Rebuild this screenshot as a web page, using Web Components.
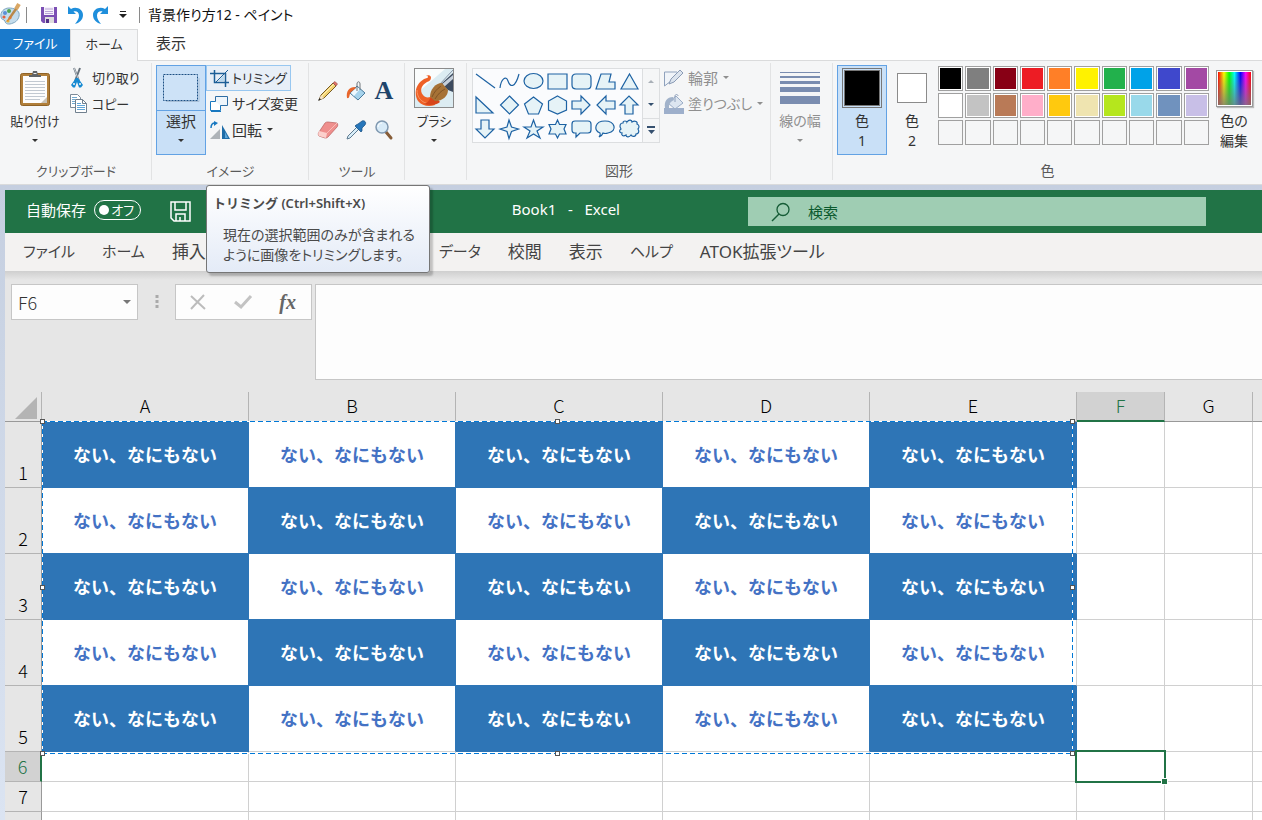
<!DOCTYPE html>
<html lang="ja">
<head>
<meta charset="utf-8">
<meta name="viewport" content="width=device-width, initial-scale=1">
<title>背景作り方12 - ペイント</title>
<style>
html, body { margin: 0; height: 100%; }
body { overflow: hidden; background: #fff; color: #333; font: 15px/20px "Noto Sans", "Noto Sans CJK JP", sans-serif; }
</style>
</head>
<body>
<paint-app></paint-app>
<script>
const base = `<style>
*, *::before, *::after { box-sizing: border-box; }
button, input, textarea { font: inherit; color: inherit; margin: 0; padding: 0; border: 0; background: none; outline: 0; border-radius: 0; }
button { cursor: default; }
</style>`;

function define(name, html, setup) {
  const template = document.createElement('template');
  template.innerHTML = base + html;
  customElements.define(name, class extends HTMLElement {
    constructor() {
      super();
      this.attachShadow({ mode: 'open' }).append(template.content.cloneNode(true));
    }
    connectedCallback() {
      if (setup && !this.ready) { this.ready = true; setup(this, this.shadowRoot); }
    }
  });
}

const icons = {
  palette: [20, 22, `<path d="M9 4C4 4 0 8 1 13c0 3 3 2 4 4 0 3 4 4 8 2 4-1 7-6 6-10-1-3-5-5-10-5z" fill="#c3dcec" stroke="#7ea6c0"/><circle cx="5" cy="9" r="2" fill="#5b8fd6"/><circle cx="9" cy="7" r="2" fill="#51a551"/><circle cx="4" cy="13" r="1.6" fill="#e2603f"/><circle cx="8" cy="17" r="1.6" fill="#e3b23c"/><path d="M18 2L9 15" stroke="#b9884a" stroke-width="2.4"/><path d="M19 0l-3 5" stroke="#d9a765" stroke-width="4"/><path d="M10 12l-4 6 6-4z" fill="#e07a30"/>`],
  save: [16, 16, `<path d="M0 0h16v16H2l-2-2z" fill="#7b4fb4"/><path d="M3 0h10v8H3z" fill="#f6f2fb"/><path d="M4 2h8M4 4.500h8M4 6.500h8" stroke="#b9a3d8"/><path d="M4 10h9v6H4z" fill="#ddd"/><path d="M5 12h3v4H5z" fill="#553289"/>`],
  undo: [16, 18, `<path d="M1 0v8h8L6.500 5.500C9 4.500 12 6 12 9.500c0 3-1.500 5.500-4 8.500 4-1 8-4 8-9C16 3 9 0 4 3z" fill="#1f8fdc"/>`],
  redo: [16, 18, `<path d="M15 0v8H7l2.500-2.500C7 4.500 4 6 4 9.500c0 3 1.500 5.500 4 8.500-4-1-8-4-8-9C0 3 7 0 12 3z" fill="#1f8fdc"/>`],
  custom: [8, 8, `<path d="M1 .5h6" stroke="#222"/><path d="M0 3h8L4 7z" fill="#222"/>`],
  arrow: [6, 4, `<path d="M0 0h6L3 3z" fill="currentColor"/>`],
  up: [6, 4, `<path d="M0 4h6L3 1z" fill="currentColor"/>`],
  more: [8, 8, `<path d="M0 1h8" stroke="#35506f" stroke-width="2"/><path d="M1 4h7L4.500 8z" fill="#35506f"/>`],
  paste: [32, 38, `<rect x="1.500" y="4.500" width="29" height="32" rx="2" fill="#b17f3a" stroke="#8f6226"/><path d="M4 7h24v27H4z" fill="#fdfdfd"/><path d="M22 34l6-6v6z" fill="#c9c2b6"/><path d="M6 12.500h20M6 15.500h20M6 18.500h20M6 21.500h20M6 24.500h20M6 27.500h20M6 30.500h15" stroke="#c2c9d1"/><path d="M10 6h3l1-4h4l1 4h3v2H10z" fill="#606468"/><path d="M14.500 4.500h3" stroke="#eee"/>`],
  cut: [14, 20, `<path d="M4 0l5 13M10 0L5 13" stroke="#67717b" stroke-width="2"/><path d="M4 0l5 13" stroke="#c6cdd4"/><path d="M6 10h2l5 7-2 2.500h-2L7 14l-2 5.500H3L1 17z" fill="#168ad2"/><circle cx="4" cy="16" r="1" fill="#f5f6f7"/><circle cx="10" cy="16" r="1" fill="#f5f6f7"/>`],
  copy: [17, 20, `<path d="M.5.500h7l3 3v10H.5z" fill="#fff" stroke="#7c8b99"/><path d="M2 3.500h5M2 5.500h3M2 7.500h3M2 9.500h3" stroke="#70a9d0"/><path d="M5.500 5.500h7l4 4v9h-11z" fill="#fff" stroke="#70808f"/><path d="M12.500 5.500v4h4" fill="none" stroke="#70808f"/><path d="M7 9.500h4M7 11.500h8M7 13.500h8M7 15.500h8" stroke="#5fa5d8"/>`],
  select: [36, 28, `<path d="M3 27.500h33V4" fill="none" stroke="#a9bfd6"/><rect x=".5" y=".5" width="34" height="26" fill="#cde2f7" stroke="#1c4f82" stroke-dasharray="2 1"/>`],
  crop: [19, 17, `<path d="M4.500 0v12.500H19M0 3.500h15.500V17" fill="none" stroke="#1d5f97" stroke-width="1.500"/><path d="M6 12L18 0" stroke="#1d5f97"/><path d="M8 11l6-6v6z" fill="#b8d8ee"/>`],
  resize: [18, 16, `<path d="M5.500.500h12v9h-12z" fill="#eef5fb" stroke="#2e6da4"/><path d="M5.500 5.500h-5v9h10v-5" fill="#fff" stroke="#1878c0"/><path d="M1 15.500h10" stroke="#1878c0"/>`],
  rotate: [20, 18, `<path d="M10 8v10H0z" fill="#aeb3b8"/><path d="M12 4l8 14h-8z" fill="#1e6ca8"/><path d="M15 11l3 6h-3z" fill="#60a7d8"/><path d="M1 7c0-3 1-5 4-5" fill="none" stroke="#1878c0" stroke-width="1.500"/><path d="M4 0l4 2-4 3z" fill="#1878c0"/>`],
  pencil: [20, 20, `<path d="M1 19l2-5L15 2l3 3L6 17z" fill="#f3d372" stroke="#765a24"/><path d="M4 15L16 3" stroke="#fff0b5"/><path d="M15 2l2-1.500 2.500 2.500L18 5z" fill="#e27168" stroke="#8d4b45" stroke-width=".6"/><path d="M1 19l2-5 3 3z" fill="#f5e4c8"/><path d="M0 20l1.500-3 1.500 1.500z" fill="#2b2b2b"/>`],
  fill: [20, 20, `<path d="M4 12L11 5l8 7-7 7z" fill="#a6d3ec" stroke="#497a9c"/><path d="M5 12l6-6 3 2-6 7z" fill="#eef9ff"/><path d="M11 10V3c0-3 3-3 3 0v6" fill="none" stroke="#70777d"/><path d="M9 6C3 6 0 10 1 17c3 1 2-4 4-6l5-4z" fill="#e8662c"/>`],
  eraser: [22, 18, `<path d="M8 2c1-1 2-1 3-1l9 1c1 1 1 3 0 4L11 16c-1 1-2 1-3 1l-6-2c-1-1-1-3 0-4z" fill="#ef8f8d" stroke="#b8605e" stroke-width=".7"/><path d="M2 10l8 2-1 5-7-2c-1-1-1-3 0-5z" fill="#fcd0cc"/><path d="M10 12L20 2" stroke="#f9bdb8"/>`],
  picker: [20, 20, `<path d="M2 16l9-9 2 2-9 9-3 1z" fill="#d8edf8" stroke="#5e7b91"/><path d="M10 5l2-1 4-3c2-1 5 1 3 4l-3 3v3l-1 1-6-6z" fill="#2776ba" stroke="#174d80" stroke-width=".7"/>`],
  zoom: [18, 20, `<path d="M11 12l5 6" stroke="#865c37" stroke-width="3" stroke-linecap="round"/><circle cx="7" cy="7" r="6" fill="#d8ebf8" stroke="#7f98b0" stroke-width="1.500"/><path d="M3 7c0-3 2-4 4-4" stroke="#fff" fill="none"/>`],
  brush: [40, 40, `<rect x=".5" y=".5" width="39" height="39" fill="#dcecf2" stroke="#8b8b8b"/><path d="M1 1h30L1 27z" fill="#fafcfc"/><path d="M39 5v19l-5-2-7-6z" fill="#3c4a5e"/><path d="M39 7L27 17l3 2 9-8z" fill="#c5cfda"/><path d="M39 2L25 17" stroke="#8896a8"/><path d="M17 9c0 3-1 4-4 5-5 3-8 8-4 13 2 3 6 3 10 1l2 9c-6 2-13 1-17-4C-2 22 5 12 13 10c2-1 1-2-1-2 2-1 4-1 5 1z" fill="#ee6026"/><path d="M3 22c0 7 4 13 13 14" stroke="#f79260" fill="none"/><path d="M17 29c-2 3-3 6-7 7 6 2 13 1 16-2l-5-6z" fill="#d7451a"/><path d="M16 29c0-7 5-14 12-14l6 7c0 6-5 11-13 11z" fill="#a67236"/><path d="M18 29c2-5 5-8 9-11M21 31c3-5 6-8 10-10" stroke="#805426" fill="none"/>`],
  outline: [20, 17, `<path d="M13 2H.500v14L16 4" fill="#f0f4f9" stroke="#8fa2bd"/><path d="M5 14l2-5 9-9 3 3-9 9z" fill="#dce4ee" stroke="#8a9bb5"/>`],
  pour: [20, 20, `<path d="M0 14h20v6H0z" fill="#9dafcb"/><path d="M4 9l8-7 7 7-8 6z" fill="#dce5f0" stroke="#9aacc6"/><path d="M9 3C3 3 0 7 1 14h4c0-4 1-6 5-8z" fill="#a1b2ca"/><path d="M11 8V2c0-2 3-2 3 0" fill="none" stroke="#8ea0bb"/>`],
  widths: [40, 33, `<path d="M0 .5h40" stroke="#7a8db0"/><path d="M0 5h40" stroke="#7a8db0" stroke-width="2"/><path d="M0 10.500h40" stroke="#7a8db0" stroke-width="3"/><path d="M0 17.500h40" stroke="#7a8db0" stroke-width="5"/><path d="M0 28h40" stroke="#7a8db0" stroke-width="8"/>`],
  floppy: [22, 22, `<path d="M1 1h19v19H4l-3-3zM5 1v8h11V1M6 20v-7h9v7M10 20v-4" fill="none" stroke="#fff" stroke-width="1.500"/>`],
  search: [18, 18, `<circle cx="11" cy="6.500" r="6" fill="none" stroke="#155c36" stroke-width="1.300"/><path d="M7 11l-7 7" stroke="#155c36" stroke-width="1.500"/>`],
  cancel: [16, 14, `<path d="M1 1l14 13M14 0L1 14" stroke="#bcbcbc" stroke-width="2" fill="none"/>`],
  check: [18, 14, `<path d="M1 7l6 5L17 1" stroke="#c3c3c3" stroke-width="3" fill="none"/>`],
  dots: [4, 14, `<path d="M.500 0h3v3h-3zM.500 5h3v3h-3zM.500 10h3v3h-3z" fill="#aaa"/>`],
  corner: [22, 22, `<path d="M22 0v22H0z" fill="#b4b4b4"/>`],
};
const shapes = {
  line: 'M1 3L20 17', curve: 'M1 17c1-9 6-13 8-7s7 8 11-7', ellipse: 'M1 10a9.500 7.500 0 1 0 19 0a9.500 7.500 0 1 0-19 0z', rect: 'M1 3h19v15H1z',
  round: 'M5 3h11q4 0 4 4v7q0 4-4 4H5q-4 0-4-4V7q0-4 4-4z', polygon: 'M1 18L6 3h10l-2 8h6v7z', triangle: 'M10.500 3l8.500 15H2z',
  right: 'M1 2v16h17z', diamond: 'M10.500 1l9 9-9 9-9-9z', pentagon: 'M10.500 2l9 7-4 10h-10l-4-10z', hexagon: 'M10.500 1l9 5v9l-9 4-9-4V6z',
  aright: 'M1 6h9V1l9 9-9 9v-5H1z', aleft: 'M20 6h-9V1l-9 9 9 9v-5h9z', aup: 'M6 19v-9H1l9-9 9 9h-5v9z', adown: 'M6 1v9H1l9 9 9-9h-5V1z',
  star4: 'M10 1l2.500 7 7 2-7 2.500-2.500 7-2-7-7-2.500 7-2z', star5: 'M10.500 1l2.500 7h7l-6 4 3 7-6.500-4L4 19l3-7-6-4h7z', star6: 'M10.500 1l2 4.500H19l-2 4.500 2 5h-6.500l-2 4-2-4H2l2-5-2-4.500h6.500z',
  callout: 'M4 2h13q3 0 3 3v6q0 3-3 3H9l-4 4v-4H4q-3 0-3-3V5q0-3 3-3z', bubble: 'M5 14C-2 11 0 2 10 2s13 10 3 12q-3 1-5 0-1 3-4 4 2-2 1-4z',
  cloud: 'M4 4c0-3 4-2 4-1 2-3 5-2 5 0 3-2 6 0 5 2 3 1 2 4 1 5 2 3 0 5-2 5 0 3-4 3-5 1-2 3-5 2-5 0-3 2-5 0-4-2-3 0-3-3-1-4-2-3-1-6 2-6z',
};

define('ui-icon', `<style>:host{display:block;flex:none} svg{display:block;overflow:visible} span{display:block;width:20px;font:bold 26px/20px "Liberation Serif",serif;color:#1f456b;text-align:center}</style>`, (host, root) => {
  const name = host.getAttribute('name');
  if (name === 'letter') { root.append(Object.assign(document.createElement('span'), { textContent: 'A' })); return; }
  const [w, h, body] = shapes[name]
    ? [21, 20, `<path d="${shapes[name]}" fill="${name === 'line' || name === 'curve' ? 'none' : '#e6f3f7'}" stroke="#1d62a3" stroke-width="1.200"/>`]
    : icons[name];
  root.innerHTML += `<svg width="${w}" height="${h}" viewBox="0 0 ${w} ${h}" fill="none" aria-hidden="true">${body}</svg>`;
});

define('title-bar', `<style>
:host{display:flex;align-items:center;height:29px;color:#111;background:#fff}
button{display:block;margin-right:10px}
.rule{width:1px;height:16px;background:#8a8a8a}
.first{margin:0 14px 0 6px}.last{margin:0 8px 0 2px}
h1{margin:0;font:inherit;font-size:14px;font-feature-settings:"palt"}
</style><ui-icon name="palette"></ui-icon><span class="rule first"></span>
<button aria-label="上書き保存"><ui-icon name="save"></ui-icon></button><button aria-label="元に戻す"><ui-icon name="undo"></ui-icon></button><button aria-label="やり直し"><ui-icon name="redo"></ui-icon></button><button aria-label="カスタマイズ"><ui-icon name="custom"></ui-icon></button>
<span class="rule last"></span><h1><slot></slot></h1>`);

define('ribbon-tabs', `<style>
:host{display:block}
nav{display:flex;height:32px;border-bottom:1px solid #dadbdc;font-size:13px;font-feature-settings:"palt"}
a{color:#333;text-decoration:none;text-align:center;line-height:29px;width:66px}
.file{width:70px;height:28px;background:#1979ca;color:#fff}
.on{width:68px;height:32px;background:#f5f6f7;border:1px solid #dadbdc;border-bottom:0}
.view{font-size:15px}
</style><nav><a class="file" href="#file">ファイル</a><a class="on" href="#home">ホーム</a><a class="view" href="#view">表示</a></nav>`);

define('ribbon-group', `<style>
:host{position:relative;display:flex;flex-direction:column;flex:none;width:var(--group);height:123px}
:host([wide]){flex:1}
:host(:not([wide]))::after{content:"";position:absolute;right:0;top:2px;bottom:4px;width:1px;background:#e2e3e4}
.body{display:flex;align-items:flex-start;flex:1;padding:4px 0 0 var(--pad,4px)}
.label{text-align:center;height:23px;color:#5a5a5a;font-size:var(--label,13px);font-feature-settings:"palt"}
</style><div class="body"><slot></slot></div><div class="label"></div><slot name="tip"></slot>`,
(host, root) => { root.querySelector('.label').textContent = host.getAttribute('label') || ''; });

define('big-button', `<style>
:host{display:block;flex:none;width:var(--button,50px);font-size:var(--size,15px);font-feature-settings:"palt"}
button{width:100%;height:90px;display:flex;flex-direction:column;align-items:center;border:1px solid transparent;white-space:nowrap}
.pic{height:44px;width:100%;display:flex;justify-content:center;align-items:center}
.text{line-height:20px;padding-top:1px}
ui-icon{margin-top:8px}
:host([on]) button{background:#c9e0f7;border-color:#62a2e4}
:host([split]) .pic{border-bottom:1px solid #62a2e4;height:45px}
:host([split]) .text{padding-top:0}
:host([muted]){color:#8f8f8f}
</style><button><span class="pic"><slot name="pic"></slot></span><span class="text"><slot></slot></span></button>`,
(host, root) => { if (host.hasAttribute('menu')) root.querySelector('button').insertAdjacentHTML('beforeend', '<ui-icon name="arrow"></ui-icon>'); });

define('small-button', `<style>
:host{display:block;font-size:var(--size,15px);font-feature-settings:"palt"}
button{display:flex;align-items:center;height:26px;padding:0 3px;border:1px solid transparent;white-space:nowrap}
.pic{width:22px;display:flex}
:host([on]) button{background:#e8eff7;border-color:#98c7f0}
:host([muted]){color:#8f8f8f}
:host([muted]) .pic{width:24px}
.menu{margin-left:5px}
</style><button><span class="pic"></span><slot></slot></button>`,
(host, root) => {
  root.querySelector('.pic').innerHTML = `<ui-icon name="${host.getAttribute('icon')}"></ui-icon>`;
  if (host.hasAttribute('menu')) root.querySelector('button').insertAdjacentHTML('beforeend', '<ui-icon class="menu" name="arrow"></ui-icon>');
});

define('tool-grid', `<style>
:host{display:grid;grid-template-columns:repeat(3,28px);grid-auto-rows:39px;padding-top:6px}
button{display:grid;place-items:center}
</style>${['pencil:鉛筆','fill:塗りつぶし','letter:テキスト','eraser:消しゴム','picker:色の選択','zoom:拡大鏡'].map(t => { const [n, l] = t.split(':'); return `<button aria-label="${l}"><ui-icon name="${n}"></ui-icon></button>`; }).join('')}`);

define('shape-gallery', `<style>
:host{display:flex;margin-top:3px;height:75px;border:1px solid #dcdee0;background:#fafbfd}
.grid{display:grid;grid-template-columns:repeat(7,24px);grid-auto-rows:24px;width:169px}
button{display:grid;place-items:center}
.scroll{display:grid;grid-template-rows:repeat(3,1fr);width:17px;border-left:1px solid #dcdee0;background:#f5f6f7;color:#35506f}
.scroll button:first-child{color:#a9b0b8}.scroll button:last-child{border-top:1px solid #dcdee0}
</style><div class="grid">${'line curve ellipse rect round polygon triangle right diamond pentagon hexagon aright aleft aup adown star4 star5 star6 callout bubble cloud'.split(' ').map(n => `<button aria-label="${n}"><ui-icon name="${n}"></ui-icon></button>`).join('')}</div>
<div class="scroll"><button aria-label="上"><ui-icon name="up"></ui-icon></button><button aria-label="下"><ui-icon name="arrow"></ui-icon></button><button aria-label="その他"><ui-icon name="more"></ui-icon></button></div>`);

define('color-chip', `<style>
:host{display:block;width:30px;height:30px;border:1px solid #8b8b8b;padding:1px;background:#fff}
:host([big]){width:40px;height:40px;padding:1px;border-color:#777;background:#c9e0f7}
div{height:100%;background:var(--c)}
:host([big]) div{border:1px solid #777}
</style><div></div>`);

define('color-palette', `<style>
:host{display:grid;grid-template-columns:repeat(10,1fr);grid-auto-rows:25px;gap:2px;flex:none;width:271px;margin:1px 3px 0 1px}
button{border:1px solid #a0a0a0;padding:1px}
span{display:block;height:100%}
.set{background:#fff}
</style>${'#000 #7f7f7f #880015 #ed1c24 #ff7f27 #fff200 #22b14c #00a2e8 #3f48cc #a349a4 #fff #c3c3c3 #b97a57 #ffaec9 #ffc90e #efe4b0 #b5e61d #99d9ea #7092be #c8bfe7'.split(' ').map(c => `<button class="set" aria-label="${c}"><span style="background:${c}"></span></button>`).join('')}${'<button aria-label="空き"></button>'.repeat(10)}`);

define('spectrum-chip', `<style>
:host{display:block;width:37px;height:37px;padding:1px;border:1px solid #999;background:#fff;box-shadow:1px 1px 1px #bbb}
div{height:100%;background:linear-gradient(transparent,#777c),linear-gradient(90deg,red,#ff0 18%,lime 34%,cyan 50%,blue 68%,#f0f 84%,red)}
</style><div></div>`);

define('tip-box', `<style>
:host{position:absolute;z-index:5;left:54px;top:124px;width:224px;height:88px;padding:7px 6px;border:1px solid #767676;border-radius:3px;background:linear-gradient(#fff,#e4ebf7);box-shadow:3px 3px 2px #0003;color:#4a4a4a;font-size:14px;white-space:nowrap;font-feature-settings:"palt"}
h2{margin:0 0 12px;font:600 13px/20px "Noto Sans","Noto Sans CJK JP",sans-serif}
p{margin:0 0 0 10px}
</style><h2><slot name="title"></slot></h2><p role="tooltip"><slot></slot></p>`);

define('paint-ribbon', `<style>
:host{display:flex;height:124px;background:#f5f6f7;border-bottom:1px solid #dadbdc}
.stack{display:block}
</style>
<ribbon-group label="クリップボード" style="--group:152px;--pad:4px">
  <big-button menu style="--button:62px;--size:13px"><ui-icon slot="pic" name="paste"></ui-icon>貼り付け</big-button>
  <div class="stack"><small-button icon="cut" style="--size:13px">切り取り</small-button><small-button icon="copy" style="--size:13px">コピー</small-button></div>
</ribbon-group>
<ribbon-group label="イメージ" style="--group:157px;--pad:4px">
  <big-button on split menu><ui-icon slot="pic" name="select"></ui-icon>選択</big-button>
  <div class="stack"><small-button on icon="crop" style="--size:13px">トリミング</small-button><small-button icon="resize" style="--size:14px">サイズ変更</small-button><small-button icon="rotate" menu>回転</small-button></div>
  <tip-box slot="tip"><span slot="title">トリミング (Ctrl+Shift+X)</span>現在の選択範囲のみが含まれる<br>ように画像をトリミングします。</tip-box>
</ribbon-group>
<ribbon-group label="ツール" style="--group:96px;--pad:5px"><tool-grid></tool-grid></ribbon-group>
<ribbon-group style="--group:62px;--pad:4px"><big-button menu style="--size:13px"><ui-icon slot="pic" name="brush"></ui-icon>ブラシ</big-button></ribbon-group>
<ribbon-group label="図形" style="--group:304px;--pad:5px;--label:14px"><shape-gallery></shape-gallery>
  <div class="stack"><small-button muted menu icon="outline">輪郭</small-button><small-button muted menu icon="pour" style="--size:14px">塗りつぶし</small-button></div>
</ribbon-group>
<ribbon-group style="--group:62px;--pad:4px"><big-button muted menu style="--size:14px"><ui-icon slot="pic" name="widths"></ui-icon>線の幅</big-button></ribbon-group>
<ribbon-group wide label="色" style="--label:14px">
  <big-button on style="--size:14px"><color-chip big slot="pic" style="--c:#000"></color-chip>色<br>1</big-button>
  <big-button style="--size:14px"><color-chip slot="pic" style="--c:#fff"></color-chip>色<br>2</big-button>
  <color-palette></color-palette>
  <big-button style="--button:44px;--size:14px"><spectrum-chip slot="pic"></spectrum-chip>色の<br>編集</big-button>
</ribbon-group>`);

define('excel-bar', `<style>
:host{display:flex;height:43px;background:#217346;color:#fff;align-items:center;padding-left:21px}
label{display:flex;align-items:center;gap:8px;line-height:16px}
.switch{position:relative;display:flex;align-items:center;justify-content:flex-end;width:47px;height:20px;padding-right:6px;margin-bottom:3px;border:1px solid #fff;border-radius:10px;font-size:13px;font-feature-settings:"palt"}
input[type=checkbox]{appearance:none;position:absolute;left:4px;width:10px;height:10px;border-radius:5px;background:#fff}
.caption{margin-bottom:4px}
.save{margin-left:29px}
.name{flex:1;text-align:right;padding-right:128px;white-space:pre;margin-bottom:5px}
.find{width:458px;height:29px;margin-right:56px;padding-left:24px;background:#9fcdb3;color:#0b5a2e;gap:18px}
.find input{flex:1;min-width:0}
input::placeholder{color:#0b5a2e;opacity:1}
</style>
<label><span class="caption">自動保存</span><span class="switch"><input type="checkbox" role="switch">オフ</span></label>
<button class="save" aria-label="保存"><ui-icon name="floppy"></ui-icon></button>
<div class="name">Book1   -   Excel</div>
<label class="find"><ui-icon name="search"></ui-icon><input type="search" aria-label="検索" placeholder="検索"></label>`);

define('excel-menu', `<style>
:host{display:block}
nav{display:flex;height:38px;background:#f3f2f1;padding-left:18px;line-height:37px;font-size:17px;font-feature-settings:"palt"}
a{color:#444;text-decoration:none;margin-right:27px;white-space:nowrap}
.k{font-size:15px}
.far{margin-left:206px}
</style><nav><a class="k" href="#f">ファイル</a><a class="k" href="#h">ホーム</a><a href="#i">挿入</a><a class="k far" href="#d">データ</a><a href="#r">校閲</a><a href="#v">表示</a><a class="k" href="#help">ヘルプ</a><a href="#atok">ATOK拡張ツール</a></nav>`);

define('formula-bar', `<style>
:host{display:flex;align-items:flex-start;height:121px;padding:13px 0 0 6px;background:linear-gradient(#cfcfcf,#e6e6e6 9px)}
.box{display:flex;align-items:center;height:36px;background:#fdfdfd;border:1px solid #c6c6c6}
.ref{width:127px;padding:0 6px;color:#333}
.ref input{flex:1;min-width:0;height:34px;font:300 18px/34px "Noto Sans CJK JP",sans-serif}
svg{display:block}
.dots{margin:11px 16px 0 17px}
.keys{width:137px;justify-content:space-between;padding:0 15px 0 14px}
.fx{font:italic bold 20px/20px "Liberation Serif",serif;color:#666}
textarea{flex:1;height:96px;margin-left:3px;background:#fdfdfd;border:1px solid #c6c6c6;border-right:0;resize:none}
</style><div class="box ref"><input aria-label="名前ボックス" value="F6"><button aria-label="一覧"><svg width="8" height="4"><path d="M0 0h8L4 4z" fill="#777"/></svg></button></div>
<ui-icon class="dots" name="dots"></ui-icon>
<div class="box keys"><button aria-label="キャンセル"><ui-icon name="cancel"></ui-icon></button><button aria-label="入力"><ui-icon name="check"></ui-icon></button><button class="fx">fx</button></div>
<textarea aria-label="数式"></textarea>`);

const tableRows = [1, 2, 3, 4, 5].map(r => `<tr><th scope="row">${r}</th>${[0, 1, 2, 3, 4].map(c => `<td class="${(r + c) % 2 ? 'fill' : 'plain'}">ない、なにもない</td>`).join('')}<td></td><td></td><td></td></tr>`).join('');
define('excel-sheet', `<style>
:host{display:block;position:relative;background:#fff}
table{width:100%;table-layout:fixed;border-collapse:separate;border-spacing:0;color:#000}
col.head{width:37px}col.wide{width:207px}col.std{width:88px}
th,td{padding:0;border-right:1px solid #d0d0d0;border-bottom:1px solid #d0d0d0}
th{background:#e6e6e6;font:300 18px/24px "Noto Sans CJK JP",sans-serif}
thead th{height:30px;padding-bottom:3px;border-bottom-color:#999;border-right-color:#b4b4b4}
thead th:first-child{padding:3px 3px 0 10px}
tbody th{vertical-align:bottom;padding-bottom:3px;border-right-color:#999;border-bottom-color:#b4b4b4}
tbody tr{height:66px}
tbody tr.low{height:30px}
td{text-align:center;padding-bottom:2px;font:bold 18px/26px "Noto Sans CJK JP",sans-serif}
.fill{background:#2e75b6;color:#fff;border-color:#2e75b6}
.plain{color:#4472c4;border-color:#2e75b6}
.plain:nth-child(6){border-right-color:#d0d0d0}
tr:nth-child(5) .plain{border-bottom-color:#d0d0d0}
th.on{background:#d2d2d2;color:#217346}
thead th.on{border-bottom:2px solid #217346}
tbody th.on{border-right:2px solid #217346}
tr :last-child{border-right:0}
.low .active{position:relative}
.active div{position:absolute;inset:-2px;border:2px solid #217346}
.active div::after{content:"";position:absolute;right:-4px;bottom:-4px;width:7px;height:7px;border:1px solid #fff;background:#217346}
.marquee{position:absolute;left:37px;top:29px;width:1031px;height:333px;--h:repeating-linear-gradient(90deg,#0078d7 0 5px,#fff 5px 8px);--v:repeating-linear-gradient(#0078d7 0 5px,#fff 5px 8px);background:var(--h) top/100% 1px no-repeat,var(--h) bottom/100% 1px no-repeat,var(--v) left/1px 100% no-repeat,var(--v) right/1px 100% no-repeat;display:grid;grid-template:repeat(3,1fr)/repeat(3,1fr);margin:0;pointer-events:none}
i{width:5px;height:5px;border:1px solid #555;background:#fff;margin:-2px;place-self:center}
.t{align-self:start}.b{align-self:end}.l{justify-self:start}.r{justify-self:end}
.none{visibility:hidden}
</style>
<table><colgroup><col class="head">${'<col class="wide">'.repeat(5)}<col class="std"><col class="std"><col></colgroup>
<thead><tr><th aria-label="すべて選択"><ui-icon name="corner"></ui-icon></th>${'ABCDE'.split('').map(c => `<th scope="col">${c}</th>`).join('')}<th scope="col" class="on">F</th><th scope="col">G</th><th></th></tr></thead>
<tbody>${tableRows}
<tr class="low"><th scope="row" class="on">6</th>${'<td></td>'.repeat(5)}<td class="active"><div></div></td><td></td><td></td></tr>
<tr class="low"><th scope="row">7</th>${'<td></td>'.repeat(8)}</tr><tr class="low"><th></th>${'<td></td>'.repeat(8)}</tr></tbody></table>
<div class="marquee"><i class="t l"></i><i class="t"></i><i class="t r"></i><i class="l"></i><i class="none"></i><i class="r"></i><i class="b l"></i><i class="b"></i><i class="b r"></i></div>`);

define('paint-app', `<style>
:host{display:flex;flex-direction:column;height:100vh;overflow:hidden}
title-bar,ribbon-tabs,paint-ribbon{flex:none}
main{flex:1;min-height:0;overflow:hidden;padding:5px 0 0 5px;background:linear-gradient(#c5cfe0,#dbe4f2)}
</style><title-bar>背景作り方12 - ペイント</title-bar><ribbon-tabs></ribbon-tabs><paint-ribbon></paint-ribbon>
<main><excel-bar></excel-bar><excel-menu></excel-menu><formula-bar></formula-bar><excel-sheet></excel-sheet></main>`);
</script>
</body>
</html>
